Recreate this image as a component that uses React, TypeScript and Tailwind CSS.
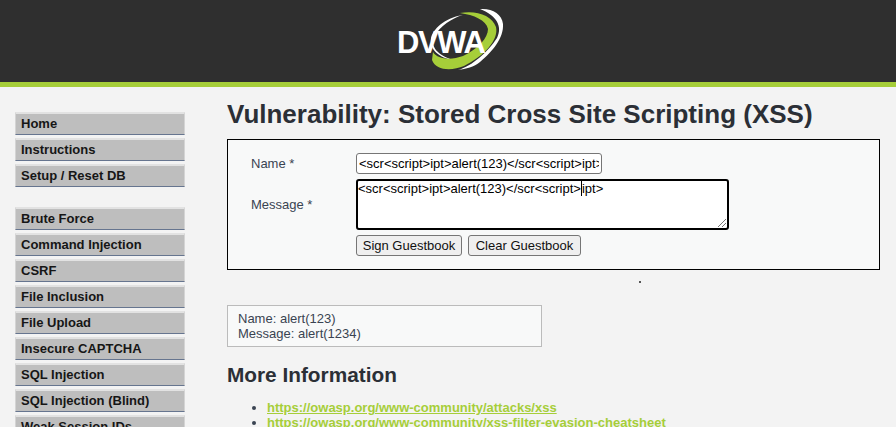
const topMenu = ['Home', 'Instructions', 'Setup / Reset DB'];
const vulnMenu = [
  'Brute Force',
  'Command Injection',
  'CSRF',
  'File Inclusion',
  'File Upload',
  'Insecure CAPTCHA',
  'SQL Injection',
  'SQL Injection (Blind)',
  'Weak Session IDs',
];

function MenuBlock({ items }: { items: string[] }) {
  return (
    <ul className="flex flex-col gap-[3px]">
      {items.map((item) => (
        <li
          key={item}
          className="h-[23px] pl-[5px] bg-[#bebebe] border-t-2 border-t-[#e2e2e2] border-b border-b-[#66758f] border-x border-x-[#d4d4d4] text-[13px] leading-[19px] font-bold text-[#161616] shrink-0"
        >
          {item}
        </li>
      ))}
    </ul>
  );
}

function Logo() {
  return (
    <div className="relative w-[110px] h-[70px]">
      {/* viewBox is in page pixels so the swoosh lines up with the reference */}
      <svg viewBox="395 5 110 70" className="absolute inset-0 w-full h-full">
        <path d="M463 15 C452 18 440 26 434 37 C430 47 438 55 453 60 C440 58 429 50 431 38 C434 26 449 17 463 15 Z" fill="#ffffff" />
        <path d="M460 13 C476 10 492 15 496 27 C499 40 484 56 464 66 C452 71 436 71 432 60 L433 52 C438 60 452 60 463 56 C478 49 488 38 488 29 C486 20 474 15 460 13 Z" fill="#a6ce39" />
        <path d="M480 9 C492 8 502 14 503 24 C504 38 492 52 480 62 C474 67 466 69 458 70 C472 66 488 52 497 38 C503 26 496 15 480 9 Z" fill="#ffffff" />
      </svg>
      <span className="absolute left-[2px] top-[21px] text-[31px] leading-[34px] font-bold text-white tracking-[-1.4px] font-['Liberation_Sans',sans-serif]">
        DVWA
      </span>
    </div>
  );
}

export default function App() {
  return (
    <div className="h-[427px] overflow-hidden bg-[#f3f3f3] text-[#1e2530] font-['Liberation_Sans',Arial,sans-serif]">
      {/* Header */}
      <header className="h-[87px] bg-[#2f2f2f] border-b-[5px] border-b-[#a6ce39] flex justify-center items-start pl-[4px] pt-[5px]">
        <Logo />
      </header>

      <div className="flex">
        {/* Sidebar */}
        <nav className="w-[227px] shrink-0 pl-[15px] pr-[42px] pt-[25px] flex flex-col gap-[20px]">
          <MenuBlock items={topMenu} />
          <MenuBlock items={vulnMenu} />
        </nav>

        {/* Main */}
        <main className="w-[653px] pt-[11px]">
          <h1 className="text-[26px] leading-[32px] font-bold text-[#2b2f36] whitespace-nowrap">
            Vulnerability: Stored Cross Site Scripting (XSS)
          </h1>

          <form className="mt-[9px] h-[131px] border border-black bg-[#f8f9f9] pl-[23px] pt-[13px] text-[13px] text-[#3a4452]">
            <div className="flex items-center h-[21px]">
              <label className="w-[105px]">Name *</label>
              <input
                readOnly
                value="<scr<script>ipt>alert(123)</scr<script>ipt>"
                className="w-[246px] h-[21px] bg-white border border-[#767676] rounded-[3px] px-[2px] text-[13px] text-black outline-none"
              />
            </div>
            <div className="flex items-center mt-[5px]">
              <label className="w-[105px]">Message *</label>
              <div className="relative w-[373px] h-[51px] bg-white border-[2px] border-black rounded-[3px] text-[13px] leading-[15px] text-black">
                <span>&lt;scr&lt;script&gt;ipt&gt;alert(123)&lt;/scr&lt;script&gt;</span>
                <span className="border-l border-l-black">ipt&gt;</span>
                <svg viewBox="0 0 10 10" className="absolute right-0 bottom-0 w-[10px] h-[10px]">
                  <path d="M1 9 L9 1 M5 9 L9 5" stroke="#777" strokeWidth="1" />
                </svg>
              </div>
            </div>
            <div className="flex gap-[6px] mt-[5px] ml-[105px]">
              <button type="button" className="w-[106px] h-[21px] bg-[#efefef] border border-[#767676] rounded-[3px] text-[13px] text-[#111]">
                Sign Guestbook
              </button>
              <button type="button" className="w-[113px] h-[21px] bg-[#efefef] border border-[#767676] rounded-[3px] text-[13px] text-[#111]">
                Clear Guestbook
              </button>
            </div>
          </form>

          <div className="h-[35px] relative">
            <span className="absolute left-[412px] top-[11px] w-[2px] h-[2px] bg-[#555]" />
          </div>

          <div className="w-[315px] h-[42px] border border-[#bbbbbb] bg-[#f8f9f9] pl-[10px] pt-[5px] text-[13px] leading-[15px] text-[#3a4452]">
            <div>Name: alert(123)</div>
            <div>Message: alert(1234)</div>
          </div>

          <h2 className="mt-[14px] text-[20.8px] leading-[28px] font-bold text-[#2b2f36]">More Information</h2>

          <ul className="mt-[11px] pl-[40px] list-disc text-[13px] leading-[15px] font-bold text-[#a6ce39] marker:text-[#3a4452]">
            <li>
              <a href="#" className="underline">https://owasp.org/www-community/attacks/xss</a>
            </li>
            <li>
              <a href="#" className="underline">https://owasp.org/www-community/xss-filter-evasion-cheatsheet</a>
            </li>
          </ul>
        </main>
      </div>
    </div>
  );
}
